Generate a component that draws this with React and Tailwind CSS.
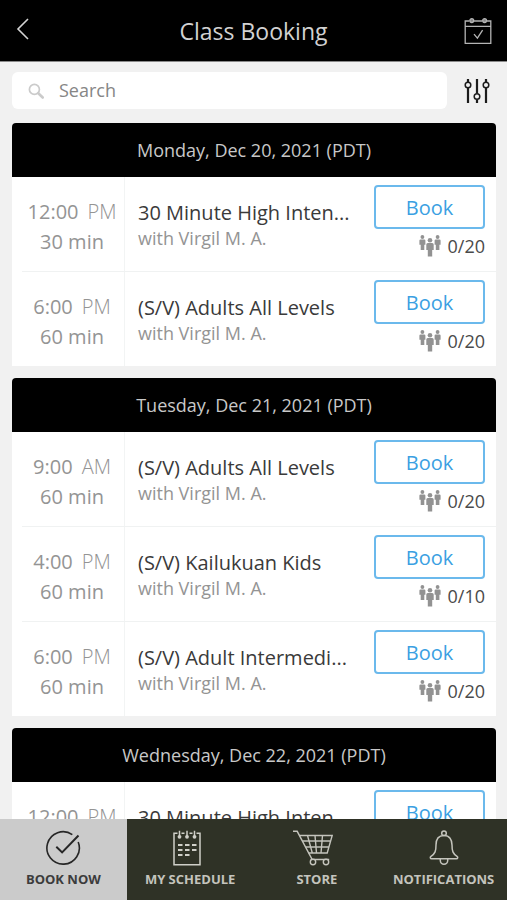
const days = [
  {
    date: "Monday, Dec 20, 2021 (PDT)",
    classes: [
      { time: "12:00", half: "PM", length: "30 min", name: "30 Minute High Inten...", spots: "0/20" },
      { time: "6:00", half: "PM", length: "60 min", name: "(S/V) Adults All Levels", spots: "0/20" },
    ],
  },
  {
    date: "Tuesday, Dec 21, 2021 (PDT)",
    classes: [
      { time: "9:00", half: "AM", length: "60 min", name: "(S/V) Adults All Levels", spots: "0/20" },
      { time: "4:00", half: "PM", length: "60 min", name: "(S/V) Kailukuan Kids", spots: "0/10" },
      { time: "6:00", half: "PM", length: "60 min", name: "(S/V) Adult Intermedi...", spots: "0/20" },
    ],
  },
  {
    date: "Wednesday, Dec 22, 2021 (PDT)",
    classes: [
      { time: "12:00", half: "PM", length: "30 min", name: "30 Minute High Inten...", spots: "0/20" },
    ],
  },
];

function BackIcon() {
  return (
    <svg width="14" height="22" viewBox="0 0 14 22" fill="none" stroke="#d4d4d4" strokeWidth="1.6" aria-hidden="true">
      <path d="M13 1 3 11l10 10" />
    </svg>
  );
}

function CalendarCheckIcon() {
  return (
    <svg width="28" height="28" viewBox="0 0 28 28" fill="none" stroke="#b4b4b4" strokeWidth="1.3" aria-hidden="true">
      <path d="M5.5 4H1.2v22.3h25.6V4h-4.3M10 4h8.5M1.2 9.3h25.6" />
      <circle cx="7.8" cy="3.6" r="1.9" fill="#888" />
      <circle cx="20.6" cy="3.6" r="1.9" fill="#888" />
      <path d="m10 17.2 3.4 4 5.2-8" />
    </svg>
  );
}

function SearchIcon() {
  return (
    <svg width="16" height="16" viewBox="0 0 16 16" fill="none" stroke="#cbcbcb" aria-hidden="true">
      <circle cx="6.4" cy="6.4" r="5" strokeWidth="1.7" />
      <path d="m10.3 10.3 4.4 4.2" strokeWidth="2.6" strokeLinecap="round" />
    </svg>
  );
}

function FiltersIcon() {
  return (
    <svg width="26" height="26" viewBox="0 0 26 26" fill="none" stroke="#1c1c1c" aria-hidden="true">
      <path d="M4 1v3.5M4 10v15M13 1v14.5M13 21.5v3.5M22 1v3.5M22 10v15" strokeWidth="2.2" />
      <circle cx="4" cy="7" r="2.8" strokeWidth="1.5" />
      <circle cx="13" cy="18.5" r="2.8" strokeWidth="1.5" />
      <circle cx="22" cy="7" r="2.8" strokeWidth="1.5" />
    </svg>
  );
}

function PeopleIcon() {
  return (
    <svg width="22" height="22" viewBox="0 0 22 22" fill="#929292" aria-hidden="true">
      <circle cx="3.4" cy="2" r="1.9" />
      <path d="M1.6 4.400h3.600q1.200 0 1.200 1.200v4.200H5.300v5.200H1.700V9.800H.4V5.600q0-1.200 1.200-1.200Z" />
      <circle cx="18.6" cy="2" r="1.9" />
      <path d="M16.800 4.400h3.600q1.200 0 1.200 1.200v4.200h-1.200v5.200h-3.600V9.800h-1.200V5.600q0-1.200 1.200-1.200Z" />
      <circle cx="11" cy="5.200" r="2.300" />
      <path d="M8.800 8h4.400q1.500 0 1.500 1.500v5.500h-1.500v6.500H8.800V15H7.300V9.500Q7.300 8 8.800 8Z" />
    </svg>
  );
}

function BookNowIcon() {
  return (
    <svg width="36" height="36" viewBox="0 0 36 36" fill="none" stroke="#262626" strokeWidth="1.6" aria-hidden="true">
      <path d="M27.3 4.600A16.200 16.200 0 1 0 33.200 12" />
      <path d="m11.300 16.800 5.800 5.600L33.500 5.500" strokeWidth="2" />
    </svg>
  );
}

function ScheduleIcon() {
  return (
    <svg width="36" height="36" viewBox="0 0 36 36" fill="none" stroke="#cfcfc8" strokeWidth="1.5" aria-hidden="true">
      <path d="M5.500 3.300H2v31.400h26V3.300h-3.500M9.500 3.300h3M17.500 3.300h3" />
      <path d="M7.500.8v6M15 .8v6M22.500.8v6" />
      <g fill="#cfcfc8" stroke="none">
        <circle cx="7.500" cy="6.800" r="1.900" />
        <circle cx="15" cy="6.800" r="1.900" />
        <circle cx="22.500" cy="6.800" r="1.900" />
      </g>
      <path d="M6 15h4.500M13 15h4.500M20 15h4.500M6 20h4.500M13 20h4.500M20 20h4.500M6 25h4.500M13 25h4.500" strokeWidth="1.800" />
    </svg>
  );
}

function StoreIcon() {
  return (
    <svg width="48" height="36" viewBox="0 0 48 36" fill="none" stroke="#c4c4bc" strokeWidth="1.4" aria-hidden="true">
      <path d="M0 1.300h4.200l15 28.200h17" />
      <path d="M6.500 5.500h32.700l-5 17.500H15.700M9.400 11h28.300M12.500 17h23.500M14.500 5.500l4.800 17.500M22 5.500l1.500 17.500M29.500 5.500 28 23" />
      <circle cx="20" cy="32" r="2.700" fill="#2f3226" />
      <circle cx="33" cy="32" r="2.700" fill="#2f3226" />
    </svg>
  );
}

function BellIcon() {
  return (
    <svg width="36" height="36" viewBox="0 0 36 36" fill="none" stroke="#c4c4bc" strokeWidth="1.5" aria-hidden="true">
      <circle cx="18" cy="3.200" r="2.300" />
      <path d="M18 5.500c-5.500 0-8 4-8 9.500 0 6-.8 8.500-5 11.300-1.200.9-.9 2.500.6 2.500h24.800c1.500 0 1.800-1.600.6-2.500-4.200-2.800-5-5.300-5-11.300 0-5.500-2.500-9.500-8-9.500Z" />
      <path d="M14.300 29v1.500a3.700 3.700 0 0 0 7.400 0V29" />
    </svg>
  );
}

function ClassRow({ item, first }) {
  return (
    <li className="flex flex-col">
      {!first && <div className="ml-[10px] h-px bg-[#f0f2f2]" />}
      <div className="flex h-[94px]">
        <div className="flex w-[113px] shrink-0 flex-col items-center border-r border-[#f2f4f4] pt-[20px] pl-[8px] text-[20px] leading-[30px] text-[#949494]">
          <p className="flex gap-[9px]">
            <span>{item.time}</span>
            <span className="font-light">{item.half}</span>
          </p>
          <p>{item.length}</p>
        </div>
        <div className="min-w-0 flex-1 pt-[22px] pl-[13px]">
          <h3 className="text-[20px] leading-[28px] whitespace-nowrap text-[#3a3a3a]">{item.name}</h3>
          <p className="text-[18px] leading-[22px] text-[#949494]">with Virgil M. A.</p>
        </div>
        <div className="flex w-[122px] shrink-0 flex-col pt-2 pr-[11px]">
          <button type="button" className="h-[44px] rounded-[4px] border-2 border-[#6bb9ec] pt-px text-[20px] leading-[30px] text-[#3b9fe2]">
            Book
          </button>
          <p className="flex items-center justify-end gap-[7px] pt-[4px] text-[18px] leading-[26px] text-[#4a4a4a]">
            <PeopleIcon />
            {item.spots}
          </p>
        </div>
      </div>
    </li>
  );
}

function NavItem({ icon, label, active }) {
  return (
    <a
      href="#"
      aria-current={active ? "page" : undefined}
      className={
        "flex flex-1 flex-col items-center pt-[11px] text-[13px] leading-[26px] font-bold whitespace-nowrap " +
        (active ? "bg-[#cbcbcb] text-[#3c3c3c]" : "text-[#c4c4bd]")
      }
    >
      {icon}
      <span>{label}</span>
    </a>
  );
}

export default function App() {
  return (
    <div className="flex h-screen flex-col overflow-hidden bg-[#f1f1f1] font-['Open_Sans',sans-serif]">
      <header className="flex h-[62px] shrink-0 items-center justify-between border-b border-[#8a8a8a] bg-black px-[15px]">
        <button type="button" aria-label="Back" className="flex w-7 pb-1">
          <BackIcon />
        </button>
        <h1 className="text-[23px] leading-[32px] text-[#d2d2d2]">Class Booking</h1>
        <button type="button" aria-label="My calendar" className="flex w-7">
          <CalendarCheckIcon />
        </button>
      </header>

      <main className="min-h-0 flex-1 overflow-hidden px-[12px] pr-[11px] pt-[10px]">
        <div className="flex items-center gap-[17px]">
          <label className="flex h-[37px] flex-1 items-center gap-[15px] rounded-[6px] bg-white pl-4">
            <SearchIcon />
            <input
              type="search"
              aria-label="Search"
              placeholder="Search"
              className="min-w-0 flex-1 bg-transparent pb-[2px] text-[18px] leading-[26px] outline-none placeholder:text-[#868686]"
            />
          </label>
          <button type="button" aria-label="Filters" className="mr-[6px] flex">
            <FiltersIcon />
          </button>
        </div>

        <div className="flex flex-col gap-3 pt-[14px]">
          {days.map((day) => (
            <section key={day.date} className="overflow-hidden rounded-t-[4px] bg-white">
              <h2 className="h-[54px] bg-black text-center text-[18px] leading-[54px] text-[#c8c8c8]">{day.date}</h2>
              <ul>
                {day.classes.map((item, i) => (
                  <ClassRow key={i} item={item} first={i === 0} />
                ))}
              </ul>
            </section>
          ))}
        </div>
      </main>

      <nav className="flex h-[81px] shrink-0 bg-[#2f3226]">
        <NavItem icon={<BookNowIcon />} label="BOOK NOW" active />
        <NavItem icon={<ScheduleIcon />} label="MY SCHEDULE" />
        <NavItem icon={<StoreIcon />} label="STORE" />
        <NavItem icon={<BellIcon />} label="NOTIFICATIONS" />
      </nav>
    </div>
  );
}
